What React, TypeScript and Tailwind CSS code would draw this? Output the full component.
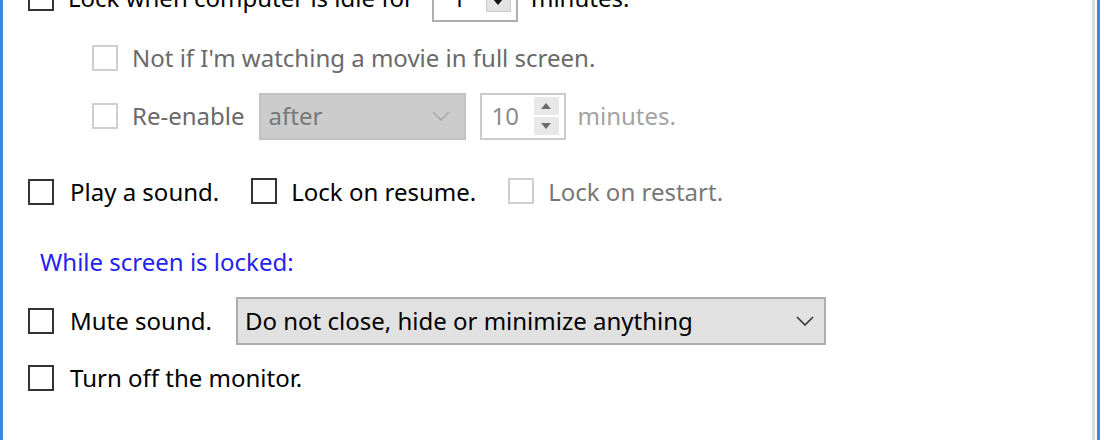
import React from "react";

const font = { fontFamily: '"Noto Sans", "Open Sans", sans-serif' };

function Box({ disabled = false }: { disabled?: boolean }) {
  return (
    <span
      className={
        "inline-block size-[26px] shrink-0 border-2 bg-white " +
        (disabled ? "border-[#cfcfcf]" : "border-[#333333]")
      }
    />
  );
}

function Chevron({ color }: { color: string }) {
  return (
    <svg width="18" height="10" viewBox="0 0 18 10" fill="none">
      <path d="M1 1l8 8 8-8" stroke={color} strokeWidth="1.6" />
    </svg>
  );
}

function Tri({ up, color }: { up?: boolean; color: string }) {
  return (
    <svg width="10" height="6" viewBox="0 0 10 6">
      <path d={up ? "M0 6L5 0L10 6Z" : "M0 0L10 0L5 6Z"} fill={color} />
    </svg>
  );
}

function Spin({ value, disabled }: { value: string; disabled?: boolean }) {
  return (
    <div
      className={
        "flex h-[47px] w-[86px] items-center border-2 bg-white pl-[10px] pr-[5px] " +
        (disabled ? "border-[#cccccc] text-[#8a8a8a]" : "border-[#adadad] text-black")
      }
    >
      <span className="flex-1">{value}</span>
      <div className="flex flex-col gap-[2px]">
        <div className="flex h-[18px] w-[25px] items-center justify-center bg-[#e8e8e8]">
          <Tri up color={disabled ? "#6b6b6b" : "#111"} />
        </div>
        <div className="flex h-[18px] w-[25px] items-center justify-center bg-[#e8e8e8]">
          <Tri color={disabled ? "#6b6b6b" : "#111"} />
        </div>
      </div>
    </div>
  );
}

export default function App() {
  return (
    <div className="flex h-[440px] w-[1100px] overflow-hidden bg-white text-[24px] leading-none text-black" style={font}>
      <div className="w-[3px] shrink-0 bg-[#3d86d9]" />
      <div className="flex flex-1 flex-col pl-[25px] border-r-[3px] border-[#dcdcdc]">
        <div className="mt-[-26px] flex h-[48px] items-center">
          <Box />
          <span className="ml-[14px]">Lock when computer is idle for</span>
          <div className="ml-[18px] flex h-[48px] w-[86px] items-center border-2 border-[#adadad] bg-white pl-[18px] pr-[5px]">
            <span className="flex-1">1</span>
            <div className="mt-[8px] flex h-[20px] w-[25px] items-center justify-center border border-[#c9c9c9] bg-[#e3e3e3]">
              <Tri color="#111" />
            </div>
          </div>
          <span className="ml-[13px]">minutes.</span>
        </div>

        <div className="mt-[7px] flex h-[58px] items-center pl-[64px]">
          <Box disabled />
          <span className="ml-[14px] text-[#6a6a6a]">Not if I'm watching a movie in full screen.</span>
        </div>

        <div className="flex h-[58px] items-center pl-[64px]">
          <Box disabled />
          <span className="ml-[14px] text-[#6a6a6a]">Re-enable</span>
          <div className="ml-[14px] flex h-[47px] w-[207px] items-center justify-between border-2 border-[#c2c2c2] bg-[#cccccc] pl-[8px] pr-[14px] text-[#777777]">
            <span>after</span>
            <Chevron color="#a8a8a8" />
          </div>
          <div className="ml-[14px]">
            <Spin value="10" disabled />
          </div>
          <span className="ml-[12px] text-[#a3a3a3]">minutes.</span>
        </div>

        <div className="mt-[23px] flex h-[48px] items-center">
          <Box />
          <span className="ml-[16px]">Play a sound.</span>
          <span className="ml-[32px]"><Box /></span>
          <span className="ml-[14px]">Lock on resume.</span>
          <span className="ml-[32px]"><Box disabled /></span>
          <span className="ml-[14px] text-[#777777]">Lock on restart.</span>
        </div>

        <div className="mt-[30px] flex h-[32px] items-center pl-[12px] text-[#2323ee]">
          While screen is locked:
        </div>

        <div className="mt-[19px] flex h-[48px] items-center">
          <Box />
          <span className="ml-[16px]">Mute sound.</span>
          <div className="ml-[24px] flex h-[48px] w-[590px] items-center justify-between border-2 border-[#adadad] bg-[#e1e1e1] pl-[7px] pr-[10px]">
            <span>Do not close, hide or minimize anything</span>
            <Chevron color="#333333" />
          </div>
        </div>

        <div className="mt-[9px] flex h-[48px] items-center">
          <Box />
          <span className="ml-[16px]">Turn off the monitor.</span>
        </div>
      </div>
      <div className="w-[2px] shrink-0 bg-white" />
      <div className="w-[3px] shrink-0 bg-[#3d86d9]" />
    </div>
  );
}
